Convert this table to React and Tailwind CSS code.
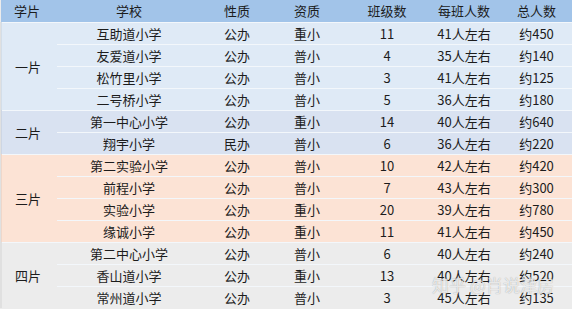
const groups = [
  {
    name: "一片",
    bg: "bg-[#dfeaf6]",
    rows: [
      ["互助道小学", "公办", "重小", "11", "41人左右", "约450"],
      ["友爱道小学", "公办", "普小", "4", "35人左右", "约140"],
      ["松竹里小学", "公办", "普小", "3", "41人左右", "约125"],
      ["二号桥小学", "公办", "普小", "5", "36人左右", "约180"]
    ]
  },
  {
    name: "二片",
    bg: "bg-[#d9e2f1]",
    rows: [
      ["第一中心小学", "公办", "重小", "14", "40人左右", "约640"],
      ["翔宇小学", "民办", "普小", "6", "36人左右", "约220"]
    ]
  },
  {
    name: "三片",
    bg: "bg-[#fce3d5]",
    rows: [
      ["第二实验小学", "公办", "普小", "10", "42人左右", "约420"],
      ["前程小学", "公办", "普小", "7", "43人左右", "约300"],
      ["实验小学", "公办", "重小", "20", "39人左右", "约780"],
      ["缘诚小学", "公办", "重小", "11", "41人左右", "约450"]
    ]
  },
  {
    name: "四片",
    bg: "bg-[#ececec]",
    rows: [
      ["第二中心小学", "公办", "普小", "6", "40人左右", "约240"],
      ["香山道小学", "公办", "重小", "13", "40人左右", "约520"],
      ["常州道小学", "公办", "普小", "3", "45人左右", "约135"]
    ]
  }
];

const cell = "h-[22px] p-0 border-t border-[#f3f7fb] align-middle";

export default function App() {
  return (
    <div className="relative w-[572px] h-[309px] overflow-hidden bg-[#ececec] font-['Noto_Sans_CJK_SC',sans-serif] text-[13px] leading-none text-[#1c1c1c]">
      <table className="w-[572px] table-fixed border-collapse">
        <colgroup>
          <col className="w-[56px]" />
          <col className="w-[144px]" />
          <col className="w-[72px]" />
          <col className="w-[73px]" />
          <col className="w-[82px]" />
          <col className="w-[72px]" />
          <col className="w-[73px]" />
        </colgroup>
        <thead>
          <tr className="h-[22px] bg-[#a2c4e9]">
            <th className="p-0 pl-[13px] text-left font-normal">学片</th>
            <th className="p-0 text-center font-normal">学校</th>
            <th className="p-0 text-center font-normal">性质</th>
            <th className="p-0 pl-[21px] text-left font-normal">资质</th>
            <th className="p-0 text-center font-normal">班级数</th>
            <th className="p-0 text-center font-normal">每班人数</th>
            <th className="p-0 text-center font-normal">总人数</th>
          </tr>
        </thead>
        <tbody>
          {groups.map((group) =>
            group.rows.map((row, i) => (
              <tr key={group.name + i} className={group.bg}>
                {i === 0 ? (
                  <td rowSpan={group.rows.length} className="p-0 pl-[13px] text-left align-middle border-t border-[#f3f7fb] border-l-2 border-l-black/5">
                    {group.name}
                  </td>
                ) : null}
                <td className={`${cell} text-center`}>{row[0]}</td>
                <td className={`${cell} text-center`}>{row[1]}</td>
                <td className={`${cell} pl-[21px] text-left`}>{row[2]}</td>
                <td className={`${cell} text-center`}>{row[3]}</td>
                <td className={`${cell} text-center`}>{row[4]}</td>
                <td className={`${cell} text-center`}>{row[5]}</td>
              </tr>
            ))
          )}
        </tbody>
      </table>
      <div className="absolute left-[432px] top-[276px] text-[17px] leading-none text-white/75 [text-shadow:0_0_1px_rgba(0,0,0,0.35)] whitespace-nowrap">
        知乎 @肖说津房
      </div>
    </div>
  );
}
